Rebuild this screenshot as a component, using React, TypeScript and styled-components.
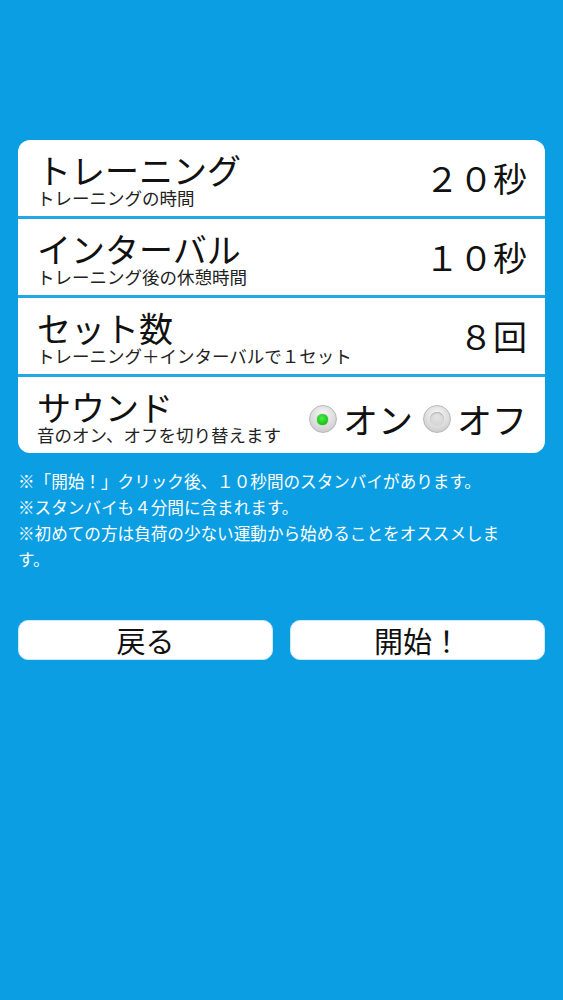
import styled, { createGlobalStyle } from "styled-components";

const GlobalStyle = createGlobalStyle`
  html, body {
    margin: 0;
    padding: 0;
    background: #0b9ee3;
  }
  body {
    font-family: "Noto Sans CJK JP", "Noto Sans", sans-serif;
    color: #111;
  }
`;

const settings = [
  { title: "トレーニング", sub: "トレーニングの時間", value: "２０秒" },
  { title: "インターバル", sub: "トレーニング後の休憩時間", value: "１０秒" },
  { title: "セット数", sub: "トレーニング＋インターバルで１セット", value: "８回" },
];

const notes = [
  "※「開始！」クリック後、１０秒間のスタンバイがあります。",
  "※スタンバイも４分間に含まれます。",
  "※初めての方は負荷の少ない運動から始めることをオススメします。",
];

export default function App() {
  return (
    <>
      <GlobalStyle />
      <Page>
        <Card>
          {settings.map((s) => (
            <Row key={s.title}>
              <Label>
                <Title>{s.title}</Title>
                <Sub>{s.sub}</Sub>
              </Label>
              <Value>{s.value}</Value>
            </Row>
          ))}
          <Row>
            <Label>
              <Title>サウンド</Title>
              <Sub>音のオン、オフを切り替えます</Sub>
            </Label>
            <Radios>
              <Radio $on />
              <RadioText>オン</RadioText>
              <Radio />
              <RadioText>オフ</RadioText>
            </Radios>
          </Row>
        </Card>

        <Notes>
          {notes.map((n) => (
            <p key={n}>{n}</p>
          ))}
        </Notes>

        <Buttons>
          <Button>戻る</Button>
          <Button>開始！</Button>
        </Buttons>
      </Page>
    </>
  );
}

const Page = styled.div`
  min-height: 1000px;
  box-sizing: border-box;
  padding: 140px 18px 0 18px;
  background: #0b9ee3;
`;

const Card = styled.div`
  display: flex;
  flex-direction: column;
  gap: 3px;
  background: #22a8e2;
  border-radius: 12px;
  overflow: hidden;
`;

const Row = styled.div`
  height: 76px;
  display: flex;
  align-items: center;
  justify-content: space-between;
  padding: 0 18px 0 19px;
  background: #fff;
`;

const Label = styled.div`
  display: flex;
  flex-direction: column;
  margin-top: 2px;
`;

const Title = styled.div`
  font-size: 34px;
  line-height: 38px;
  color: #111;
`;

const Sub = styled.div`
  font-size: 17.5px;
  line-height: 18px;
  color: #222;
`;

const Value = styled.div`
  font-size: 34px;
  line-height: 38px;
  color: #111;
`;

const Radios = styled.div`
  display: flex;
  align-items: center;
  margin-top: 8px;
`;

const Radio = styled.span<{ $on?: boolean }>`
  width: 28px;
  height: 28px;
  border-radius: 50%;
  box-sizing: border-box;
  border: 1px solid #b8b8b8;
  background: radial-gradient(circle at 50% 35%, #fafafa 0%, #d9d9d9 60%, #bdbdbd 100%);
  display: flex;
  align-items: center;
  justify-content: center;
  margin-right: 6px;

  &::after {
    content: "";
    width: ${(p) => (p.$on ? "11px" : "14px")};
    height: ${(p) => (p.$on ? "11px" : "14px")};
    border-radius: 50%;
    background: ${(p) =>
      p.$on
        ? "radial-gradient(circle at 45% 40%, #4cf04c 0%, #12c212 70%, #0a9a0a 100%)"
        : "radial-gradient(circle at 50% 40%, #e4e4e4 0%, #cfcfcf 100%)"};
    box-shadow: ${(p) => (p.$on ? "0 0 1px #0a7a0a" : "inset 0 1px 1px #b0b0b0")};
  }
`;

const RadioText = styled.span`
  font-size: 35px;
  line-height: 38px;
  color: #111;
  margin-right: 10px;

  &:last-child {
    margin-right: 0;
  }
`;

const Notes = styled.div`
  margin-top: 15px;
  max-width: 496px;
  color: #fff;
  font-size: 16.6px;
  line-height: 26px;

  p {
    margin: 0;
  }
`;

const Buttons = styled.div`
  display: grid;
  grid-template-columns: 1fr 1fr;
  gap: 17px;
  margin-top: 48px;
`;

const Button = styled.button`
  height: 40px;
  border: 1px solid #cdeaf8;
  border-radius: 10px;
  background: #fff;
  font-family: "Noto Sans CJK JP", "Noto Sans", sans-serif;
  font-size: 29px;
  line-height: 1;
  color: #111;
  padding: 0;
`;
